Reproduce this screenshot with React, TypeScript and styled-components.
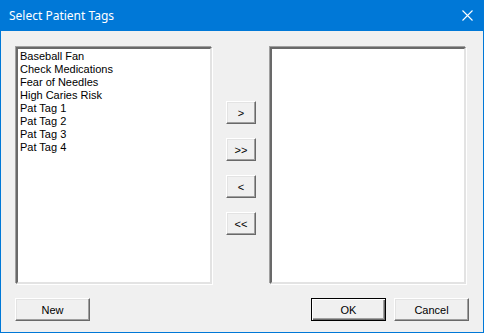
import { type FC } from 'react'
import styled, { createGlobalStyle } from 'styled-components'

const GlobalStyle = createGlobalStyle`
    html, body {
        margin: 0;
        padding: 0;
        background: #f0f0f0;
    }
`

const tags = ['Baseball Fan', 'Check Medications', 'Fear of Needles', 'High Caries Risk', 'Pat Tag 1', 'Pat Tag 2', 'Pat Tag 3', 'Pat Tag 4']
const moveButtons = ['>', '>>', '<', '<<']

const CloseIcon: FC = () => (
    <svg width="11" height="11" viewBox="0 0 11 11" fill="none">
        <path d="M0.5 0.5 L10.5 10.5 M10.5 0.5 L0.5 10.5" stroke="#fff" strokeWidth="1.1" />
    </svg>
)

const App: FC = () => {
    return (
        <>
            <GlobalStyle />
            <Window>
                <TitleBar>
                    <Title>Select Patient Tags</Title>
                    <CloseButton><CloseIcon /></CloseButton>
                </TitleBar>
                <Body>
                    <ListsRow>
                        <ListBox>
                            {tags.map((tag, index) => <ListItem key={index}>{tag}</ListItem>)}
                        </ListBox>
                        <MoveColumn>
                            {moveButtons.map((label, index) => (
                                <MoveButton key={index}>{label}</MoveButton>
                            ))}
                        </MoveColumn>
                        <ListBox />
                    </ListsRow>
                    <Footer>
                        <DialogButton>New</DialogButton>
                        <Spacer />
                        <DialogButton $default>OK</DialogButton>
                        <DialogButton>Cancel</DialogButton>
                    </Footer>
                </Body>
            </Window>
        </>
    )
}

const Window = styled.div`
    box-sizing: border-box;
    width: 484px;
    height: 333px;
    border: 1px solid #0078d7;
    border-top: none;
    display: flex;
    flex-direction: column;
    background: #f0f0f0;
`

const TitleBar = styled.div`
    height: 31px;
    flex-shrink: 0;
    background: #0078d7;
    display: flex;
    align-items: center;
    padding: 0 10px 0 8px;
`

const Title = styled.span`
    flex: 1;
    color: #fff;
    font-family: 'Noto Sans', sans-serif;
    font-size: 12px;
`

const CloseButton = styled.span`
    display: flex;
    align-items: center;
`

const Body = styled.div`
    flex: 1;
    display: flex;
    flex-direction: column;
    padding: 16px 14px 11px 14px;
`

const ListsRow = styled.div`
    display: flex;
    padding: 0 1px;
`

const ListBox = styled.div`
    box-sizing: border-box;
    width: 196px;
    height: 237px;
    background: #fff;
    border: 2px solid;
    border-color: #696969 #e3e3e3 #e3e3e3 #696969;
    box-shadow: -1px -1px 0 #a0a0a0, 1px 1px 0 #fff;
    padding: 1px 2px;
    font-family: 'Liberation Sans', Arial, sans-serif;
    font-size: 11px;
    color: #000;
`

const ListItem = styled.div`
    height: 13px;
    line-height: 13px;
`

const MoveColumn = styled.div`
    width: 58px;
    display: flex;
    flex-direction: column;
    align-items: center;
    gap: 14px;
    padding-top: 54px;
`

const RaisedButton = styled.button`
    box-sizing: border-box;
    height: 23px;
    background: #f0f0f0;
    border: 1px solid;
    border-color: #fff #696969 #696969 #fff;
    box-shadow: inset -1px -1px 0 #a0a0a0, inset 1px 1px 0 #e3e3e3;
    padding: 0;
    font-family: 'Liberation Sans', Arial, sans-serif;
    font-size: 11px;
    color: #000;
`

const MoveButton = styled(RaisedButton)`
    width: 30px;
`

const DialogButton = styled(RaisedButton)<{ $default?: boolean }>`
    width: 75px;
    ${props => props.$default && `
        border: 1px solid #000;
        box-shadow: inset 1px 1px 0 #fff, inset -1px -1px 0 #696969, inset -2px -2px 0 #a0a0a0;
    `}
`

const Footer = styled.div`
    display: flex;
    gap: 8px;
    margin-top: 14px;
`

const Spacer = styled.div`
    flex: 1;
`

export default App
